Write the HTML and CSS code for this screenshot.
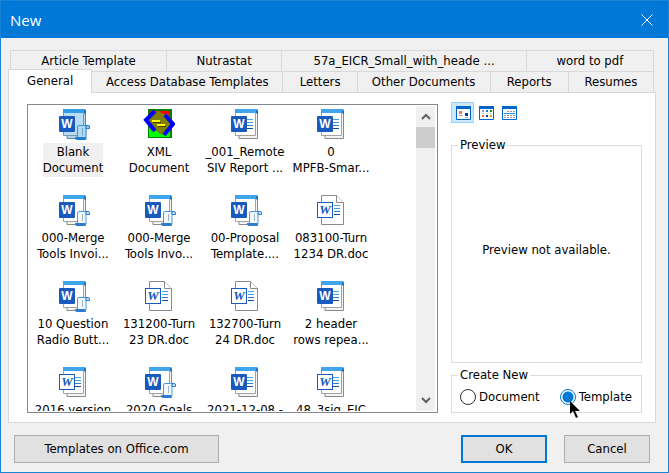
FILE: index.html
```html
<!DOCTYPE html>
<html lang="en">
<head>
    <meta charset="UTF-8">
    <meta name="viewport" content="width=device-width, initial-scale=1.0">
    <title>New</title>
    <link rel="stylesheet" href="styles.css">
</head>
<body>
    <!-- File icons -->
    <svg class="sprite" aria-hidden="true">
        <symbol id="pages" viewBox="0 0 32 32">
            <path d="M9.500 4h19v26.500H10z" fill="#f4f4f2" stroke="#8c8a86"/>
            <path d="M6.500 1.500h20v26h-20z" fill="#fff" stroke="#a3a19d"/>
            <path d="M6 1h22l1 1v4l-2-1H6z" fill="#41a5ee"/>
            <path d="M27 2l2 1v3l-2-1z" fill="#1b6fc4"/>
        </symbol>
        <symbol id="lines" viewBox="0 0 32 32">
            <path d="M18 11.500h6" stroke="#41a5ee"/>
            <path d="M18 14.500h6" stroke="#41a5ee"/>
            <path d="M18 17.500h6" stroke="#2b7cd3"/>
            <path d="M18 20.500h6" stroke="#184a9a"/>
        </symbol>
        <symbol id="badge" viewBox="0 0 32 32">
            <rect x="2" y="8" width="16" height="16" rx="1" fill="#185abd"/>
            <text x="10" y="20" class="badge-letter" fill="#fff">W</text>
        </symbol>
        <symbol id="badge-old" viewBox="0 0 32 32">
            <rect x="2.500" y="8.500" width="15" height="15" fill="#fff" stroke="#185abd"/>
            <text x="10" y="20" class="badge-letter-old" fill="#185abd">W</text>
        </symbol>
        <symbol id="scroll" viewBox="0 0 34 34">
            <path d="M20.500 29V19q0-1.500 1.500-1.500h8q-1 0-1 1.500v11h-8z" fill="#f3f8fd" stroke="#4a9be0"/>
            <path d="M29 17.500h2q1.500 0 1.500 1.500v1.500H29V19q0-1.500 1-1.500" fill="#cfe6fa" stroke="#2b7cd3"/>
            <path d="M18 29h10l1 3h-9q-2 0-2-3z" fill="#2b7cd3"/>
            <path d="M25.500 20v7" stroke="#9bb4cc"/>
        </symbol>
        <symbol id="icon-docx" viewBox="0 0 32 32">
            <use href="#pages"/><use href="#lines"/><use href="#badge"/>
        </symbol>
        <symbol id="icon-dot" viewBox="0 0 32 32">
            <use href="#pages"/><use href="#lines"/><use href="#badge-old"/>
        </symbol>
        <symbol id="icon-macro" viewBox="0 0 32 32" overflow="visible">
            <use href="#pages"/><use href="#badge"/><use href="#scroll" width="34" height="34"/>
        </symbol>
        <symbol id="icon-macro-selected" viewBox="0 0 32 32" overflow="visible">
            <use href="#pages"/>
            <use href="#scroll" width="34" height="34"/>
            <path d="M6 1h22l1 1v15h4v4h-3v11H19l-1-1h-8v-3H6z" fill="#0084d8" opacity="0.28"/>
            <use href="#badge"/>
        </symbol>
        <symbol id="icon-doc" viewBox="0 0 32 32">
            <path d="M6.500 1.500h15l7 7v22h-22z" fill="#fff" stroke="#8c8a86"/>
            <path d="M21.500 1.500v7h7" fill="#fff" stroke="#8c8a86"/>
            <use href="#lines" x="1"/><use href="#badge-old"/>
        </symbol>
        <symbol id="icon-xml" viewBox="0 0 32 32">
            <path d="M5 1h24v29H5z" fill="#008000"/>
            <path d="M7 3h20v12H7z" fill="#f00"/>
            <path d="M6 15h21v14H6z" fill="#0f0"/>
            <path d="M11 4l5-1 4 3h5l6 10-9 11-5-1-4-4-4 1-6-10z" fill="#808000"/>
            <path d="M12 3L3 12l9 11M22 7l8 9-9 11" fill="none" stroke="#00f" stroke-width="4"/>
            <path d="M9 13h8M14 17h8" stroke="#ff0" stroke-width="2"/>
            <path d="M10 14.500h8M15 18.500h8" stroke="#404000"/>
        </symbol>
    </svg>

    <div class="dialog">
        <header class="titlebar">
            <h1>New</h1>
            <button class="close" aria-label="Close">
                <svg width="12" height="12"><path d="M0.500 0.500l11 11M11.500 0.500l-11 11" stroke="#fff"/></svg>
            </button>
        </header>

        <div class="tabs back-row">
            <button class="tab w-156">Article Template</button>
            <button class="tab w-115">Nutrastat</button>
            <button class="tab w-245">57a_EICR_Small_with_heade ...</button>
            <button class="tab w-127">word to pdf</button>
        </div>
        <div class="tabs front-row">
            <button class="tab w-83 active">General</button>
            <button class="tab w-192">Access Database Templates</button>
            <button class="tab w-74">Letters</button>
            <button class="tab w-133">Other Documents</button>
            <button class="tab w-78">Reports</button>
            <button class="tab w-85">Resumes</button>
        </div>

        <main class="panel">
            <div class="list">
                <div class="files">
                    <div class="file selected"><svg><use href="#icon-macro-selected"/></svg><span>Blank<br>Document</span></div>
                    <div class="file"><svg><use href="#icon-xml"/></svg><span>XML<br>Document</span></div>
                    <div class="file"><svg><use href="#icon-docx"/></svg><span>_001_Remote<br>SIV Report ...</span></div>
                    <div class="file"><svg><use href="#icon-docx"/></svg><span>0<br>MPFB-Smar...</span></div>
                    <div class="file"><svg><use href="#icon-macro"/></svg><span>000-Merge<br>Tools Invoi...</span></div>
                    <div class="file"><svg><use href="#icon-macro"/></svg><span>000-Merge<br>Tools Invo...</span></div>
                    <div class="file"><svg><use href="#icon-macro"/></svg><span>00-Proposal<br>Template....</span></div>
                    <div class="file"><svg><use href="#icon-doc"/></svg><span>083100-Turn<br>1234 DR.doc</span></div>
                    <div class="file"><svg><use href="#icon-macro"/></svg><span>10 Question<br>Radio Butt...</span></div>
                    <div class="file"><svg><use href="#icon-doc"/></svg><span>131200-Turn<br>23 DR.doc</span></div>
                    <div class="file"><svg><use href="#icon-doc"/></svg><span>132700-Turn<br>24 DR.doc</span></div>
                    <div class="file"><svg><use href="#icon-docx"/></svg><span>2 header<br>rows repea...</span></div>
                    <div class="file"><svg><use href="#icon-dot"/></svg><span>2016 version</span></div>
                    <div class="file"><svg><use href="#icon-macro"/></svg><span>2020 Goals</span></div>
                    <div class="file"><svg><use href="#icon-docx"/></svg><span>2021-12-08 -</span></div>
                    <div class="file"><svg><use href="#icon-dot"/></svg><span>48_3sig_EIC</span></div>
                </div>
                <div class="scrollbar">
                    <button aria-label="Scroll up"><svg width="10" height="7"><path d="M1 6l4-4 4 4" fill="none" stroke="#606060" stroke-width="2"/></svg></button>
                    <div class="thumb"></div>
                    <button class="down" aria-label="Scroll down"><svg width="10" height="7"><path d="M1 1l4 4 4-4" fill="none" stroke="#606060" stroke-width="2"/></svg></button>
                </div>
            </div>

            <div class="side">
                <div class="views">
                    <button class="view on" aria-label="Large icons">
                        <svg width="15" height="14">
                            <path d="M0.500 0.500h14v13h-14z" fill="#fff" stroke="#0066cc"/><path d="M0 0h15v3H0z" fill="#0066cc"/>
                            <path d="M3 5h3v3H3z" fill="#f87850"/><path d="M9 7h3v3H9z" fill="#003c9c"/>
                            <path d="M3 9.500h4M9 11.500h3" stroke="#aaa"/>
                        </svg>
                    </button>
                    <button class="view" aria-label="List">
                        <svg width="15" height="14">
                            <path d="M0.500 0.500h14v13h-14z" fill="#fff" stroke="#0066cc"/><path d="M0 0h15v3H0z" fill="#0066cc"/>
                            <path d="M3 4h2v2H3z" fill="#9c90c8"/><path d="M7 4h2v2H7z" fill="#0080e0"/><path d="M11 4h2v2h-2z" fill="#109020"/>
                            <path d="M3 9h2v2H3z" fill="#f87850"/><path d="M7 9h2v2H7z" fill="#003c9c"/><path d="M11 9h2v2h-2z" fill="#d0a010"/>
                            <path d="M3 7.500h2M7 7.500h2M11 7.500h2" stroke="#ccc"/>
                        </svg>
                    </button>
                    <button class="view" aria-label="Details">
                        <svg width="15" height="14">
                            <path d="M0.500 0.500h14v13h-14z" fill="#fff" stroke="#0066cc"/><path d="M0 0h15v3H0z" fill="#0066cc"/>
                            <path d="M5 5.500h8M2 9.500h11M2 11.500h11" stroke="#999" stroke-dasharray="2 1"/>
                            <path d="M2 7.500h11" stroke="#2090e0"/>
                        </svg>
                    </button>
                </div>

                <fieldset class="preview">
                    <legend>Preview</legend>
                    <p>Preview not available.</p>
                </fieldset>

                <fieldset class="create">
                    <legend>Create New</legend>
                    <div class="choices">
                        <label><input type="radio" name="kind">Document</label>
                        <label class="pointed"><input type="radio" name="kind" checked>Template
                            <svg class="cursor" width="12" height="18"><path d="M1 0v13l3-3 3 7 2-1-3-6h5z" fill="#000"/></svg>
                        </label>
                    </div>
                </fieldset>
            </div>
        </main>

        <footer class="actions">
            <button class="btn office">Templates on Office.com</button>
            <button class="btn default">OK</button>
            <button class="btn">Cancel</button>
        </footer>
    </div>
</body>
</html>
```
FILE: styles.css
```css
* {
    box-sizing: border-box;
}
body {
    margin: 0;
    font-family: "DejaVu Sans Condensed", "Noto Sans", sans-serif;
    font-size: 13px;
    line-height: 16px;
    color: #000;
}
button {
    font: inherit;
    color: inherit;
    padding: 0;
    border: none;
    background: none;
}
.sprite {
    display: none;
}
.badge-letter {
    font: bold 12px "Liberation Sans", sans-serif;
    text-anchor: middle;
}
.badge-letter-old {
    font: italic bold 13px "Liberation Serif", serif;
    text-anchor: middle;
}
.dialog {
    display: flex;
    flex-direction: column;
    height: 100vh;
    min-height: 400px;
    border: 1px solid #1883d7;
    background: #f0f0f0;
}
.titlebar {
    display: flex;
    align-items: center;
    justify-content: space-between;
    height: 37px;
    flex: none;
    padding: 0 15px 0 9px;
    background: #0078d7;
    color: #fff;
}
.titlebar h1 {
    margin: 0;
    font-family: "Open Sans", sans-serif;
    font-size: 15px;
    font-weight: normal;
}
.close {
    display: flex;
}

/* Tabs */
.tabs {
    display: flex;
    flex: none;
    margin: 0 14px 0 9px;
}
.back-row {
    margin-top: 12px;
    border-left: 1px solid #d9d9d9;
}
.front-row {
    margin-left: 7px;
}
.tab {
    flex-basis: 0;
    height: 21px;
    min-width: 0;
    white-space: nowrap;
    border: 1px solid #d9d9d9;
    border-width: 1px 1px 0 0;
}
.tab.active {
    height: 24px;
    margin: -2px 0 -1px;
    padding-bottom: 1px;
    border-left-width: 1px;
    background: #fff;
    z-index: 1;
}
.w-156 { flex-grow: 156; }
.w-115 { flex-grow: 115; }
.w-245 { flex-grow: 245; }
.w-127 { flex-grow: 127; }
.w-83 { flex-grow: 83; }
.w-192 { flex-grow: 192; }
.w-74 { flex-grow: 74; }
.w-133 { flex-grow: 133; }
.w-78 { flex-grow: 78; }
.w-85 { flex-grow: 85; }

.panel {
    display: flex;
    flex: 1;
    min-height: 0;
    gap: 13px;
    margin: 0 12px 0 7px;
    padding: 11px 13px 9px 18px;
    border: 1px solid #d9d9d9;
    background: #fff;
}

/* File list */
.list {
    display: flex;
    flex: 1;
    min-width: 0;
    padding: 1px 2px 1px 2px;
    border: 1px solid #828790;
}
.files {
    display: grid;
    grid-template-columns: repeat(auto-fill, 86px);
    grid-auto-rows: 86px;
    flex: 1;
    overflow: hidden;
}
.file {
    display: flex;
    flex-direction: column;
    align-items: center;
    gap: 3px;
    padding-top: 2px;
    text-align: center;
}
.file svg {
    width: 32px;
    height: 32px;
    flex: none;
    overflow: visible;
}
.file span {
    padding: 1px 2px;
    white-space: nowrap;
}
.selected span {
    padding: 1px 0;
    background: #f0f0f0;
}
.scrollbar {
    display: flex;
    flex-direction: column;
    width: 19px;
    background: #f0f0f0;
}
.scrollbar button {
    display: flex;
    align-items: center;
    justify-content: center;
    height: 21px;
}
.thumb {
    height: 21px;
    background: #cdcdcd;
}
.scrollbar .down {
    margin-top: auto;
}

/* Right column */
.side {
    display: flex;
    flex-direction: column;
    width: 191px;
}
.views {
    display: flex;
    margin-top: -2px;
}
.view {
    display: flex;
    align-items: center;
    justify-content: center;
    width: 23px;
    height: 21px;
    padding-left: 1px;
    border: 1px solid transparent;
}
.view.on {
    border-color: #99d1ff;
    background: #cce8ff;
}
fieldset {
    min-width: 0;
    margin: 0;
    padding: 0 8px;
    border: 1px solid #dcdcdc;
}
legend {
    margin-left: -2px;
    padding: 0 2px;
}
.preview {
    flex: 1;
    margin-top: 14px;
}
.preview p {
    display: flex;
    align-items: center;
    justify-content: center;
    height: 100%;
    margin: 0;
    padding-bottom: 16px;
}
.create {
    height: 46px;
    margin-top: 4px;
}
.choices {
    display: flex;
    justify-content: space-between;
    padding: 6px 1px 0 0;
}
.choices label {
    display: flex;
    align-items: center;
    gap: 3px;
}
.choices input {
    appearance: none;
    width: 16px;
    height: 16px;
    margin: 0;
    border: 1px solid #333;
    border-radius: 50%;
    background: #fff;
}
.choices input:checked {
    border-color: #0078d7;
    background: radial-gradient(circle, #0078d7 5px, #fff 6px);
}
.pointed {
    position: relative;
}
.cursor {
    position: absolute;
    left: 9px;
    top: 12px;
}

/* Bottom buttons */
.actions {
    display: flex;
    flex: none;
    gap: 17px;
    padding: 12px 18px 9px 13px;
}
.btn {
    width: 86px;
    height: 28px;
    border: 1px solid #adadad;
    background: #e1e1e1;
}
.office {
    width: 205px;
    margin-right: auto;
}
.default {
    border: 2px solid #0078d7;
}
```
